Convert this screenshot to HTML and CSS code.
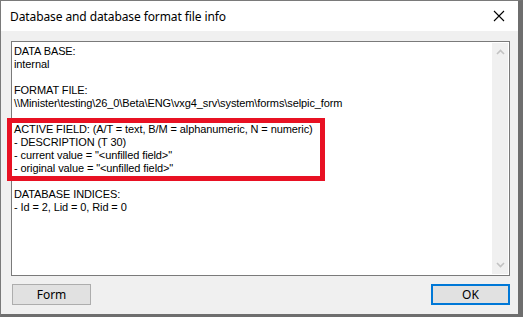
FILE: index.html
```html
<!DOCTYPE html>
<html lang="en">
  <head>
    <meta charset="UTF-8" />
    <title>Database and database format file info</title>
    <link rel="stylesheet" href="styles.css">
  </head>
  <body>
    <div class="window">
      <div class="titlebar">
        <span class="title">Database and database format file info</span>
        <svg class="close" width="12" height="12" viewBox="0 0 12 12">
          <path d="M1 1 L11 11 M11 1 L1 11" stroke="#000" stroke-width="1.1" fill="none" />
        </svg>
      </div>
      <div class="client">
        <div class="infobox">
          <div class="text">
            <div class="line">DATA BASE:</div>
            <div class="line">internal</div>
            <div class="line"></div>
            <div class="line">FORMAT FILE:</div>
            <div class="line">\\Minister\testing\26_0\Beta\ENG\vxg4_srv\system\forms\selpic_form</div>
            <div class="line"></div>
            <div class="line">ACTIVE FIELD: (A/T = text, B/M = alphanumeric, N = numeric)</div>
            <div class="line">- DESCRIPTION (T 30)</div>
            <div class="line">- current value = "&lt;unfilled field&gt;"</div>
            <div class="line">- original value = "&lt;unfilled field&gt;"</div>
            <div class="line"></div>
            <div class="line">DATABASE INDICES:</div>
            <div class="line">- Id = 2, Lid = 0, Rid = 0</div>
          </div>
          <div class="scrollbar">
            <svg width="9" height="6" viewBox="0 0 9 6">
              <path d="M1 5 L4.5 1.5 L8 5" stroke="#c2c2c2" stroke-width="1.6" fill="none" />
            </svg>
            <svg width="9" height="6" viewBox="0 0 9 6">
              <path d="M1 1 L4.5 4.5 L8 1" stroke="#c2c2c2" stroke-width="1.6" fill="none" />
            </svg>
          </div>
        </div>
        <div class="buttons">
          <button class="btn">Form</button>
          <button class="btn default">OK</button>
        </div>
        <div class="highlight"></div>
      </div>
    </div>
  </body>
</html>
```

FILE: styles.css
```css
html, body {
  margin: 0;
  padding: 0;
}
body {
  width: 523px;
  height: 317px;
  overflow: hidden;
  background-color: #6e6e6e;
}
.window {
  box-sizing: border-box;
  width: 523px;
  height: 317px;
  border-top: 1px solid #7a7a7a;
  border-left: 1px solid #7a7a7a;
  border-right: 5px solid #6e6e6e;
  border-bottom: 3px solid #6e6e6e;
  background-color: #f0f0f0;
  display: flex;
  flex-direction: column;
}
.titlebar {
  height: 30px;
  background-color: #fff;
  display: flex;
  align-items: center;
  justify-content: space-between;
  padding: 0 13px 0 9px;
  font-family: "Noto Sans", "Open Sans", sans-serif;
  font-size: 12px;
  color: #000;
}
.title {
  letter-spacing: -0.1px;
}
.client {
  position: relative;
  flex: 1;
  padding: 10px 8px 0 10px;
}
.infobox {
  box-sizing: border-box;
  height: 235px;
  border: 1px solid #7a7a7a;
  background-color: #fff;
  display: flex;
}
.text {
  flex: 1;
  padding: 3px 0 0 2px;
  font-family: "Liberation Sans", Arial, sans-serif;
  font-size: 11px;
  letter-spacing: -0.1px;
  color: #000;
}
.line {
  height: 13px;
  line-height: 13px;
  white-space: nowrap;
}
.scrollbar {
  width: 16px;
  margin: 1px 1px 1px 0;
  background-color: #f0f0f0;
  display: flex;
  flex-direction: column;
  justify-content: space-between;
  align-items: center;
  padding: 6px 0 6px;
}
.buttons {
  display: flex;
  justify-content: space-between;
  margin-top: 8px;
  padding: 0 0 0 1px;
}
.btn {
  box-sizing: border-box;
  width: 79px;
  height: 21px;
  background-color: #e1e1e1;
  border: 1px solid #adadad;
  font-family: "Noto Sans", "Open Sans", sans-serif;
  font-size: 12px;
  color: #000;
  padding: 0;
  line-height: 18px;
}
.btn.default {
  border: 2px solid #0078d7;
}
.highlight {
  position: absolute;
  left: 6px;
  top: 87px;
  width: 318px;
  height: 63px;
  box-sizing: border-box;
  border: 5px solid #e81123;
}
```
